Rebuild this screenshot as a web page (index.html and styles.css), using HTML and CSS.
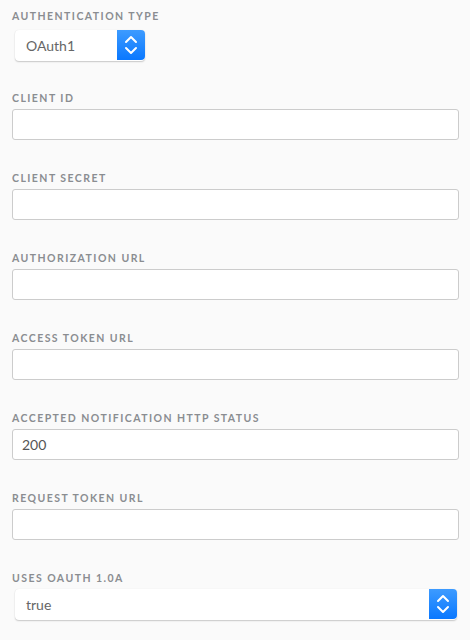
FILE: index.html
```html
<!DOCTYPE html>
<html>
<head>
<meta charset="utf-8">
<link rel="stylesheet" href="styles.css">
</head>
<body>
<div class="form">
  <div class="field first">
    <div class="label">Authentication Type</div>
    <div class="select small">
      <span class="value">OAuth1</span>
      <span class="btn"><svg width="16" height="24" viewBox="0 0 16 24"><path d="M3 9 L8 4 L13 9" fill="none" stroke="#fff" stroke-width="2" stroke-linecap="round" stroke-linejoin="round"/><path d="M3 15 L8 20 L13 15" fill="none" stroke="#fff" stroke-width="2" stroke-linecap="round" stroke-linejoin="round"/></svg></span>
    </div>
  </div>
  <div class="field">
    <div class="label">Client ID</div>
    <div class="input"></div>
  </div>
  <div class="field">
    <div class="label">Client Secret</div>
    <div class="input"></div>
  </div>
  <div class="field">
    <div class="label">Authorization URL</div>
    <div class="input"></div>
  </div>
  <div class="field">
    <div class="label">Access Token URL</div>
    <div class="input"></div>
  </div>
  <div class="field">
    <div class="label">Accepted Notification HTTP Status</div>
    <div class="input">200</div>
  </div>
  <div class="field">
    <div class="label">Request Token URL</div>
    <div class="input"></div>
  </div>
  <div class="field">
    <div class="label">Uses OAuth 1.0a</div>
    <div class="select wide">
      <span class="value">true</span>
      <span class="btn"><svg width="16" height="24" viewBox="0 0 16 24"><path d="M3 9 L8 4 L13 9" fill="none" stroke="#fff" stroke-width="2" stroke-linecap="round" stroke-linejoin="round"/><path d="M3 15 L8 20 L13 15" fill="none" stroke="#fff" stroke-width="2" stroke-linecap="round" stroke-linejoin="round"/></svg></span>
    </div>
  </div>
</div>
</body>
</html>
```
FILE: styles.css
```css
html, body {
  margin: 0;
  padding: 0;
  background: #fafafa;
}
body {
  font-family: Lato, "Open Sans", sans-serif;
  width: 470px;
  height: 640px;
  overflow: hidden;
}
.form {
  padding: 10px 11px 0 12px;
  display: flex;
  flex-direction: column;
  gap: 32px;
}
.field {
  display: flex;
  flex-direction: column;
}
.field.first {
  margin-bottom: -1px;
}
.label {
  font-size: 10.5px;
  line-height: 12px;
  font-weight: 700;
  letter-spacing: 1.45px;
  text-transform: uppercase;
  color: #8a8d91;
  margin-bottom: 5px;
}
.field.first .label {
  margin-bottom: 8px;
}
.input {
  box-sizing: border-box;
  height: 31px;
  width: 447px;
  background: #fff;
  border: 1px solid #cccccc;
  border-radius: 3px;
  font-size: 14px;
  line-height: 29px;
  padding-left: 9px;
  color: #555;
}
.select {
  box-sizing: border-box;
  height: 31px;
  margin-left: 3px;
  background: #fff;
  border-radius: 4px;
  box-shadow: 0 1px 1.5px rgba(0,0,0,0.2), 0 0 1px rgba(0,0,0,0.08);
  display: flex;
  align-items: stretch;
  justify-content: space-between;
}
.select.small { width: 130px; }
.select.wide { width: 442px; }
.select .value {
  font-size: 14px;
  line-height: 31px;
  padding-left: 11px;
  color: #666;
}
.select .btn {
  width: 28px;
  margin-bottom: 1px;
  border-radius: 0 4px 4px 0;
  background: linear-gradient(#3d9bff, #0a78ff);
  display: flex;
  align-items: center;
  justify-content: center;
}
```
